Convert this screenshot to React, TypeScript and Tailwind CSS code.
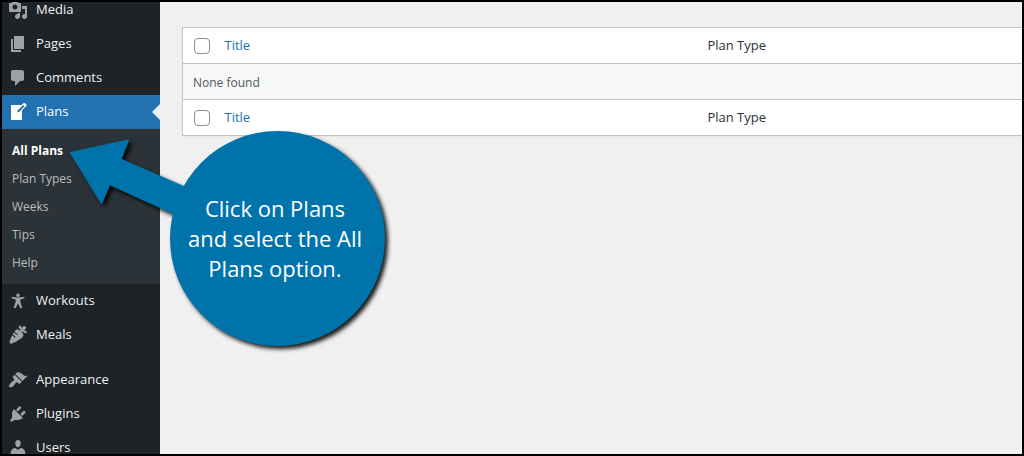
import { useState } from "react";

interface MenuItem {
  label: string;
  icon: string;
}

const ICONS = {
  media:
    "M13 11V4c0-.55-.45-1-1-1h-1.67L9 1H5L3.67 3H2c-.55 0-1 .45-1 1v7c0 .55.45 1 1 1h10c.55 0 1-.45 1-1zM7 4.5c1.38 0 2.5 1.12 2.5 2.5S8.38 9.5 7 9.5 4.5 8.38 4.5 7 5.62 4.5 7 4.5zM14 6h5v10.5c0 1.38-1.12 2.5-2.5 2.5S14 17.88 14 16.5s1.12-2.5 2.5-2.5c.17 0 .34.02.5.05V9h-3V6zm-4 8.05V13h2v3.5c0 1.38-1.12 2.5-2.5 2.5S7 17.88 7 16.5 8.12 14 9.5 14c.17 0 .34.02.5.05z",
  pages: "M6 15V2h10v13H6zm-1 1h8v2H3V5h2v11z",
  comments: "M5 2h9c1.1 0 2 .9 2 2v7c0 1.1-.9 2-2 2h-2l-5 5v-5H5c-1.1 0-2-.9-2-2V4c0-1.1.9-2 2-2z",
  plans:
    "M16.89 1.2l1.41 1.41c.39.39.39 1.02 0 1.41L14 8.33V18H3V3h10.67l1.8-1.8c.4-.39 1.03-.4 1.42 0zm-5.66 8.48l5.37-5.36-1.42-1.42-5.36 5.37-.71 2.12z",
  workouts:
    "M10 2.5a1.800 1.800 0 1 1 0 3.600a1.800 1.800 0 0 1 0-3.600zM3.700 6.300c-.4.600-.1 1.200.5 1.300l3.500.9c.2 2.100-.4 4.100-1.900 7.800-.3.900 1.300 1.500 1.800.7L10 12.600l2.400 4.400c.5.800 2.100.2 1.800-.7-1.500-3.700-2.100-5.700-1.900-7.800l3.500-.9c.6-.1.900-.7.5-1.300-.2-.3-.5-.3-.8-.2-2 .3-3.700.4-5.500.4s-3.500-.1-5.500-.4c-.3-.1-.6-.1-.8.200z",
  meals:
    "M2 18.43c1.51 1.36 11.64-4.64 13.14-7.21.72-1.22-.13-3.01-1.52-4.44C15.2 5.73 16.59 9 17.91 8.31c.6-.32.99-1.31.7-1.92-.52-1.08-2.25-1.08-3.42-1.21.83-.2 2.82-1.05 2.86-2.25.04-.92-1.13-1.97-2.05-1.86-1.21.14-1.65 1.88-2.06 3-.05-.71-.2-2.27-.98-2.95-1.04-.91-2.29-.05-2.32 1.05-.04 1.33 2.82 2.07 1.92 3.67C11.04 4.67 9.25 4.03 8.1 4.7c-.49.31-1.05.91-1.63 1.69.89.94 2.12 2.07 3.09 2.72.2.14.26.42.11.62-.14.21-.42.26-.62.12-.99-.67-2.2-1.78-3.1-2.71-.45.67-.91 1.43-1.34 2.23.85.86 1.93 1.83 2.79 2.41.2.14.25.42.11.62-.14.21-.42.26-.63.12-.85-.58-1.86-1.48-2.71-2.32C2.4 13.69 1.1 17.63 2 18.43z",
  appearance:
    "M14.48 11.06L7.41 3.99l1.5-1.5c.5-.56 2.3-.47 3.51.32 1.21.8 1.43 1.28 2.91 2.1 1.18.64 2.45 1.26 4.45.85zm-.71.71L6.7 4.7 4.93 6.47c-.39.39-.39 1.02 0 1.41l1.06 1.06c.39.39.39 1.03 0 1.42-.6.6-1.43 1.11-2.21 1.69-.35.26-.7.53-1.01.84C1.43 14.23.4 16.08 1.4 17.07c.99 1 2.84-.03 4.18-1.36.31-.31.58-.66.85-1.02.57-.78 1.08-1.61 1.69-2.21.39-.39 1.02-.39 1.41 0l1.06 1.06c.39.39 1.02.39 1.41 0z",
  plugins:
    "M13.11 4.36L9.87 7.6 8 5.73l3.24-3.24c.35-.34 1.05-.2 1.56.32.52.51.66 1.21.31 1.55zm-8 1.77l.91-1.12 9.01 9.01-1.19.84c-.71.71-2.63 1.16-3.82 1.16H6.14L4.9 17.26c-.59.59-1.54.59-2.12 0-.59-.58-.59-1.53 0-2.12l1.24-1.24v-3.88c0-1.13.4-3.19 1.09-3.89zm7.26 3.97l3.24-3.24c.34-.35 1.04-.21 1.55.31.52.51.66 1.21.31 1.55l-3.24 3.25z",
  users:
    "M10 9.25c-2.27 0-2.73-3.44-2.73-3.44C7 4.02 7.82 2 9.97 2c2.16 0 2.98 2.02 2.71 3.81 0 0-.41 3.44-2.68 3.44zm0 2.57L12.72 10c2.39 0 4.52 2.33 4.52 4.53v2.49s-3.65 1.13-7.24 1.13c-3.65 0-7.24-1.13-7.24-1.13v-2.49c0-2.25 1.94-4.48 4.47-4.48z",
};

const contentItems: MenuItem[] = [
  { label: "Media", icon: ICONS.media },
  { label: "Pages", icon: ICONS.pages },
  { label: "Comments", icon: ICONS.comments },
];

const customItems: MenuItem[] = [
  { label: "Workouts", icon: ICONS.workouts },
  { label: "Meals", icon: ICONS.meals },
];

const settingsItems: MenuItem[] = [
  { label: "Appearance", icon: ICONS.appearance },
  { label: "Plugins", icon: ICONS.plugins },
  { label: "Users", icon: ICONS.users },
];

const planLinks = ["All Plans", "Plan Types", "Weeks", "Tips", "Help"];

function MenuLink({ item, active = false }: { item: MenuItem; active?: boolean }) {
  return (
    <a
      href="#"
      className={
        active
          ? "relative flex h-[34px] items-center gap-2 bg-[#2271b1] pl-1.5 text-[13px] text-white"
          : "flex h-[34px] items-center gap-2 pl-1.5 text-[13px] text-[#f0f0f1] hover:text-[#72aee6]"
      }
    >
      <svg
        viewBox="0 0 20 20"
        aria-hidden="true"
        className={active ? "size-5 fill-white" : "size-5 fill-[#9ca2a7]"}
      >
        <path d={item.icon} />
      </svg>
      {item.label}
      {active && (
        <span className="absolute top-[9px] right-0 border-y-8 border-r-8 border-y-transparent border-r-[#f0f0f0]" />
      )}
    </a>
  );
}

function Sidebar() {
  return (
    <nav className="-mt-[9px] w-[158px] shrink-0 bg-[#1d2327]">
      {contentItems.map((item) => (
        <MenuLink key={item.label} item={item} />
      ))}
      <MenuLink item={{ label: "Plans", icon: ICONS.plans }} active />
      <ul className="bg-[#2c3338] pt-2 pb-[7px]">
        {planLinks.map((label, i) => (
          <li key={label}>
            <a
              href="#"
              className={
                i === 0
                  ? "flex h-7 items-center pl-2.5 text-xs font-bold text-white"
                  : "flex h-7 items-center pl-2.5 text-xs text-[#b9bcbe] hover:text-[#72aee6]"
              }
            >
              {label}
            </a>
          </li>
        ))}
      </ul>
      {customItems.map((item) => (
        <MenuLink key={item.label} item={item} />
      ))}
      <div className="h-[11px]" />
      {settingsItems.map((item) => (
        <MenuLink key={item.label} item={item} />
      ))}
    </nav>
  );
}

function HeadingRow({ checked, onToggle }: { checked: boolean; onToggle: () => void }) {
  return (
    <tr className="h-9 border-y border-[#c3c4c7] bg-white text-left text-[13px]">
      <th className="w-8 pl-[11px]">
        <input
          type="checkbox"
          aria-label="Select all"
          checked={checked}
          onChange={onToggle}
          className="block size-4 appearance-none rounded border border-[#8c8f94] bg-white checked:bg-[#2271b1]"
        />
      </th>
      <th className="w-[58%] pl-2.5 font-normal">
        <a href="#" className="text-[#2271b1]">
          Title
        </a>
      </th>
      <th className="pl-1.5 font-normal text-[#2c3338]">Plan Type</th>
    </tr>
  );
}

function PlansTable() {
  const [checked, setChecked] = useState(false);
  const toggle = () => setChecked((prev) => !prev);

  return (
    <table className="w-full table-fixed border-collapse border-l border-[#c3c4c7] shadow-xs">
      <thead>
        <HeadingRow checked={checked} onToggle={toggle} />
      </thead>
      <tbody>
        <tr className="h-9 bg-[#f6f7f7]">
          <td colSpan={3} className="pt-0.5 pl-2.5 text-xs text-[#50575e]">
            None found
          </td>
        </tr>
      </tbody>
      <tfoot>
        <HeadingRow checked={checked} onToggle={toggle} />
      </tfoot>
    </table>
  );
}

// Floating hint: arrow pointing at the submenu, joined to a round bubble
function Callout() {
  return (
    <div className="pointer-events-none absolute top-[128px] left-[64px] h-[228px] w-[332px]">
      <svg
        viewBox="66 130 332 228"
        aria-hidden="true"
        className="absolute inset-0 size-full fill-[#0073aa] drop-shadow-[3px_3px_2px_rgba(0,0,0,0.9)]"
      >
        <path
          d="M71 153L128 140.500L120.500 159.500L190 190L180 216L109.500 184L101.500 202.500Z"
          stroke="#0073aa"
          strokeWidth="2"
          strokeLinejoin="round"
        />
        <circle cx="277.500" cy="238.500" r="107.500" />
      </svg>
      <p className="absolute top-[63px] right-[16px] w-[214px] text-center text-[22px] leading-[30px] text-white">
        Click on Plans
        <br />
        and select the All
        <br />
        Plans option.
      </p>
    </div>
  );
}

export default function App() {
  return (
    <div className="relative flex h-screen overflow-hidden border-2 border-black bg-[#f0f0f0] font-['Open_Sans','Noto_Sans',sans-serif]">
      <Sidebar />
      <main className="min-w-0 flex-1 pt-[25px] pl-[22px]">
        <PlansTable />
      </main>
      <Callout />
    </div>
  );
}
